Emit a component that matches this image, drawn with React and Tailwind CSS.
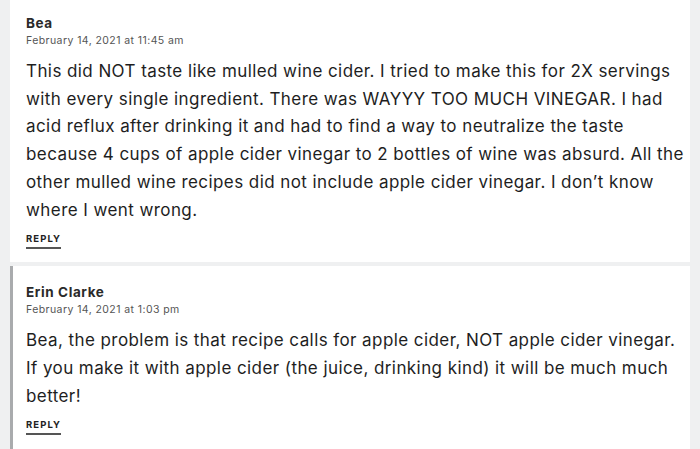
import React from 'react';

const comments = [
  {
    name: 'Bea',
    date: 'February 14, 2021 at 11:45 am',
    lines: [
      'This did NOT taste like mulled wine cider. I tried to make this for 2X servings',
      'with every single ingredient. There was WAYYY TOO MUCH VINEGAR. I had',
      'acid reflux after drinking it and had to find a way to neutralize the taste',
      'because 4 cups of apple cider vinegar to 2 bottles of wine was absurd. All the',
      'other mulled wine recipes did not include apple cider vinegar. I don\u2019t know',
      'where I went wrong.'
    ],
    reply: false
  },
  {
    name: 'Erin Clarke',
    date: 'February 14, 2021 at 1:03 pm',
    lines: [
      'Bea, the problem is that recipe calls for apple cider, NOT apple cider vinegar.',
      'If you make it with apple cider (the juice, drinking kind) it will be much much',
      'better!'
    ],
    reply: true
  }
];

function Comment({ comment }) {
  return (
    <div
      className={`bg-white ${comment.reply ? 'border-l-[3px] border-[#a9abad] pl-[13px] pt-[18px] pb-[16px]' : 'pl-[16px] pt-[15px] pb-[13px]'} pr-3`}
    >
      <div className="text-[13.5px] font-bold leading-[16px] tracking-[0.6px] text-[#2a2a2a]">{comment.name}</div>
      <div className="mt-[3px] text-[10.5px] leading-[13px] tracking-[0.42px] text-[#555]">{comment.date}</div>
      <p className="mt-[11px] text-[17px] leading-[27.7px] tracking-[0.42px] text-[#1e1e1e]">
        {comment.lines.map((line) => (
          <span key={line} className="block whitespace-nowrap">{line}</span>
        ))}
      </p>
      <div className="mt-[9px] inline-block border-b-[2px] border-[#555] pb-[2px] text-[9.5px] font-bold leading-[12px] tracking-[1.1px] text-[#222]">
        REPLY
      </div>
    </div>
  );
}

export default function App() {
  return (
    <div
      className="h-[449px] w-[700px] overflow-hidden bg-[#eff0f1] pl-[10px] pr-[10px]"
      style={{ fontFamily: 'Inter, "Liberation Sans", Arial, sans-serif' }}
    >
      <div className="flex flex-col gap-[4px]">
        {comments.map((c) => (
          <Comment key={c.name} comment={c} />
        ))}
      </div>
    </div>
  );
}
